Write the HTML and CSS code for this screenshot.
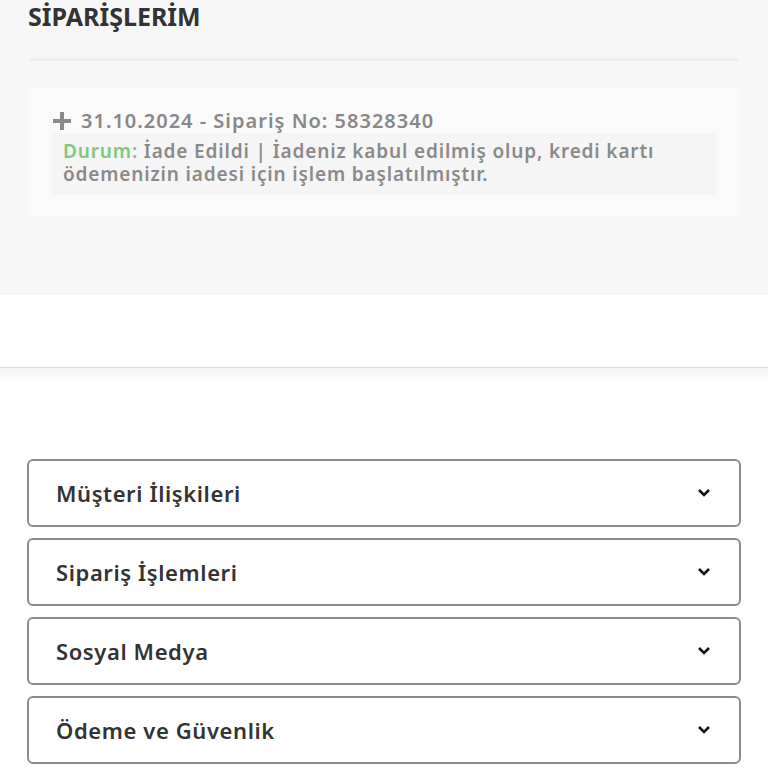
FILE: index.html
```html
<!DOCTYPE html>
<html lang="tr">
<head>
<meta charset="utf-8">
<link rel="stylesheet" href="styles.css">
</head>
<body>
<section class="orders">
  <h1 class="title">SİPARİŞLERİM</h1>
  <div class="rule"></div>
  <div class="card">
    <div class="order-head">
      <svg class="plus" viewBox="0 0 20 20" width="20" height="20"><path d="M8 1h4v7h7v4h-7v7H8v-7H1V8h7z" fill="#8a8a8a"/></svg>
      <span>31.10.2024 - Sipariş No: 58328340</span>
    </div>
    <div class="status">
      <span class="label">Durum:</span> İade Edildi | İadeniz kabul edilmiş olup, kredi kartı ödemenizin iadesi için işlem başlatılmıştır.
    </div>
  </div>
</section>
<div class="spacer"></div>
<footer class="footer">
  <div class="acc">
    <span>Müşteri İlişkileri</span>
    <svg class="chev" viewBox="0 0 14 10" width="14" height="10"><polyline points="2,2 7,7 12,2" fill="none" stroke="#111" stroke-width="2.6"/></svg>
  </div>
  <div class="acc">
    <span>Sipariş İşlemleri</span>
    <svg class="chev" viewBox="0 0 14 10" width="14" height="10"><polyline points="2,2 7,7 12,2" fill="none" stroke="#111" stroke-width="2.6"/></svg>
  </div>
  <div class="acc">
    <span>Sosyal Medya</span>
    <svg class="chev" viewBox="0 0 14 10" width="14" height="10"><polyline points="2,2 7,7 12,2" fill="none" stroke="#111" stroke-width="2.6"/></svg>
  </div>
  <div class="acc">
    <span>Ödeme ve Güvenlik</span>
    <svg class="chev" viewBox="0 0 14 10" width="14" height="10"><polyline points="2,2 7,7 12,2" fill="none" stroke="#111" stroke-width="2.6"/></svg>
  </div>
</footer>
</body>
</html>
```
FILE: styles.css
```css
html, body {
  margin: 0;
  padding: 0;
  background: #ffffff;
  font-family: "Noto Sans", "Open Sans", sans-serif;
}

.orders {
  background: #f7f7f7;
  height: 295px;
  padding: 0 27px 0 28px;
  box-sizing: border-box;
  overflow: hidden;
}

.title {
  margin: 0;
  font-size: 25px;
  line-height: 32px;
  font-weight: bold;
  color: #333333;
  letter-spacing: 0;
}

.rule {
  margin: 26px 3px 0 2px;
  height: 3px;
  background: #efefef;
}

.card {
  margin-top: 27px;
  background: #fafafa;
  height: 127px;
  padding: 21px 25px 0 24px;
  box-sizing: border-box;
}

.order-head {
  display: flex;
  align-items: center;
  gap: 9px;
  color: #888888;
  font-size: 20px;
  font-weight: 600;
  line-height: 24px;
  letter-spacing: 1px;
}

.plus {
  display: block;
}

.status {
  background: #f5f5f5;
  padding: 7px 10px 9px 11px;
  font-size: 19px;
  line-height: 23px;
  color: #8a8a8a;
  font-weight: 600;
  letter-spacing: 0.85px;
}

.label {
  color: #7ec87e;
}

.spacer {
  height: 72px;
}

.footer {
  border-top: 1px solid #dddddd;
  background: linear-gradient(#f4f4f4, #ffffff 14px);
  padding: 91px 27px 0 27px;
  display: flex;
  flex-direction: column;
  gap: 11px;
}

.acc {
  height: 68px;
  box-sizing: border-box;
  border: 2px solid #8c8c8c;
  border-radius: 6px;
  display: flex;
  align-items: center;
  justify-content: space-between;
  padding: 0 28px 0 27px;
  font-size: 22px;
  font-weight: 600;
  color: #333333;
  letter-spacing: 0.6px;
}

.chev {
  display: block;
}
```
